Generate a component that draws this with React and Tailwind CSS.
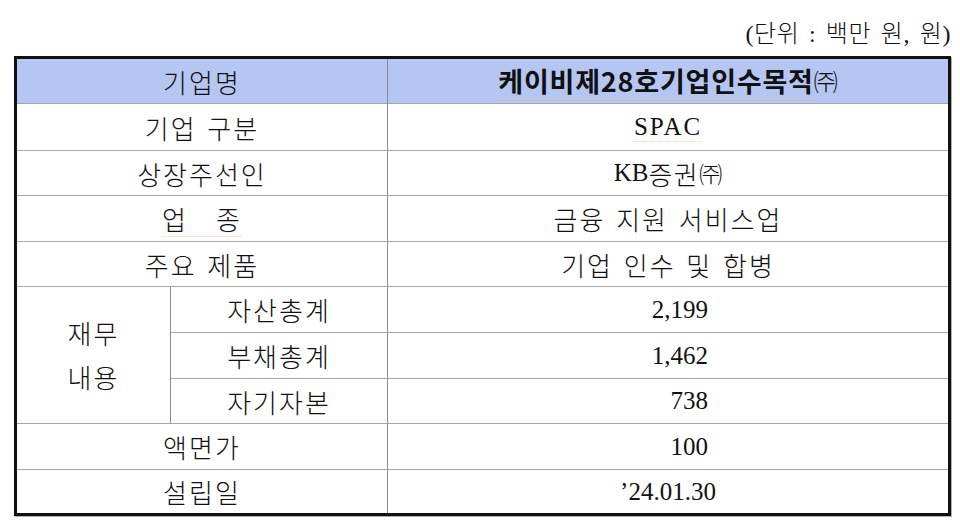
const ko = "font-['Noto_Sans_CJK_KR',sans-serif]";
const serif = "font-['Liberation_Serif','Noto_Sans_CJK_KR',serif]";

const cell = 'flex items-center justify-center border-b border-b-[#a6a6a6] text-[#111]';
const label = `${cell} ${ko} font-light text-[26px] tracking-[2px] [word-spacing:3px]`;
const value = `${cell} ${serif} text-[25px]`;
const amount = `${cell} ${serif} text-[25px] !justify-end pr-[240px]`;
const spell = 'underline decoration-dotted decoration-[#f4c7a1] underline-offset-[6px] decoration-1';

const App = () => {
  return (
    <div className="w-[960px] h-[524px] bg-white overflow-hidden">
      {/* unit note */}
      <div className={`h-[56px] pt-[19px] pr-[9px] text-right leading-[30px] text-[24px] font-light text-[#111] ${serif} tracking-[0.6px] [word-spacing:3px]`}>
        (단위 : 백만 원, 원)
      </div>

      <div className="ml-[14px] w-[937px] border-[3px] border-[#111] shadow-[1px_1px_0_#b0b0b0]">
        <div className="grid grid-cols-[154px_217px_560px] grid-rows-[45px_47px_45px_46px_45px_46px_46px_45px_46px_43px]">
          {/* header */}
          <div className={`${label} col-span-2 bg-[#b4c6f1] border-r border-r-[#8a8a8a]`}>기업명</div>
          <div className={`${cell} bg-[#b4c6f1] ${ko} text-[27px]`}>
            <span className={`font-bold tracking-[0.8px] ${spell}`}>케이비제28호기업인수목적</span>
            <span className="text-[24px] font-light">㈜</span>
          </div>

          <div className={`${label} col-span-2 border-r border-r-[#8a8a8a]`}>기업 구분</div>
          <div className={`${value} tracking-[2px]`}>
            <span className={spell}>SPAC</span>
          </div>

          <div className={`${label} col-span-2 border-r border-r-[#8a8a8a]`}>상장주선인</div>
          <div className={value}>
            KB<span className={`${ko} font-light text-[26px] tracking-[1.5px]`}>증권</span>
            <span className={`${ko} font-light text-[23px]`}>㈜</span>
          </div>

          <div className={`${label} col-span-2 border-r border-r-[#8a8a8a]`}>
            <span className={spell}>업　종</span>
          </div>
          <div className={label}>금융 지원 서비스업</div>

          <div className={`${label} col-span-2 border-r border-r-[#8a8a8a]`}>주요 제품</div>
          <div className={label}>기업 인수 및 합병</div>

          {/* financials */}
          <div className={`${label} row-span-3 flex-col leading-[44px] border-r border-r-[#8a8a8a]`}>
            <span>재무</span>
            <span>내용</span>
          </div>
          <div className={`${label} border-r border-r-[#8a8a8a]`}>자산총계</div>
          <div className={amount}>2,199</div>

          <div className={`${label} border-r border-r-[#8a8a8a]`}>부채총계</div>
          <div className={amount}>1,462</div>

          <div className={`${label} border-r border-r-[#8a8a8a]`}>자기자본</div>
          <div className={amount}>738</div>

          <div className={`${label} col-span-2 border-r border-r-[#8a8a8a]`}>액면가</div>
          <div className={amount}>100</div>

          <div className={`${label} col-span-2 border-r border-r-[#8a8a8a] border-b-0`}>설립일</div>
          <div className={`${value} border-b-0`}>’24.01.30</div>
        </div>
      </div>
    </div>
  );
};

export default App;
